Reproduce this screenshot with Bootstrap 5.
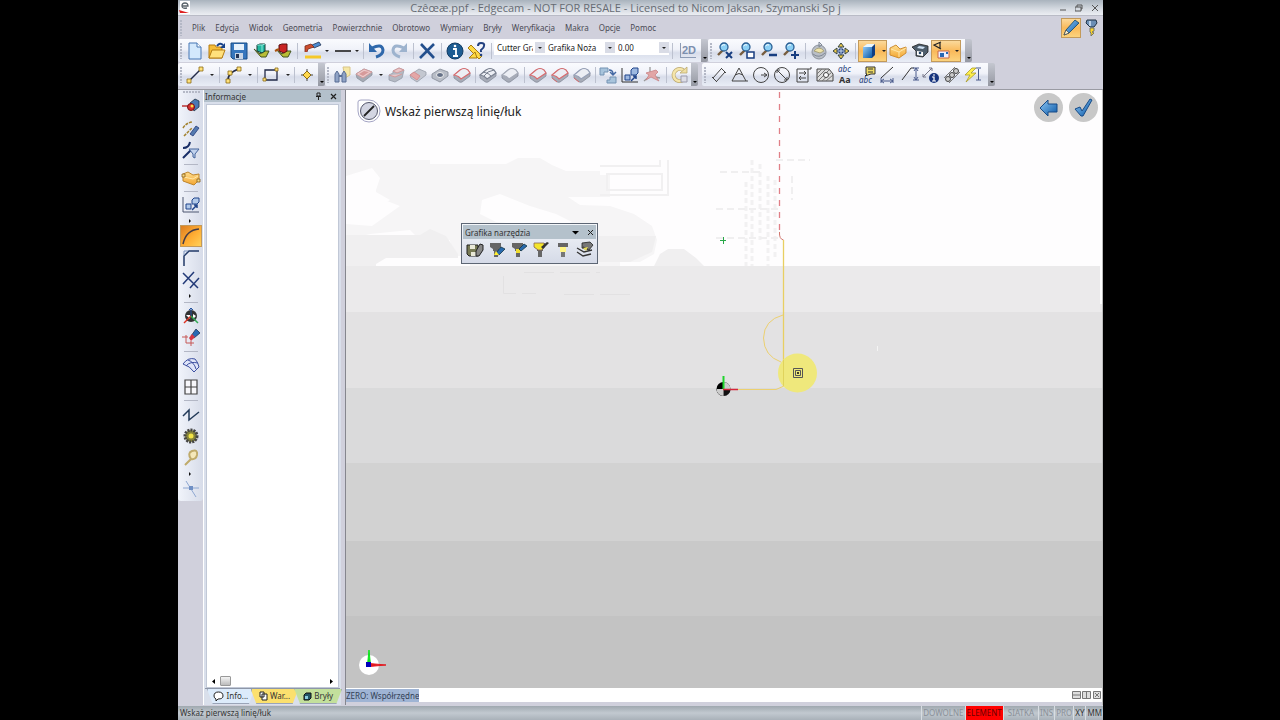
<!DOCTYPE html>
<html lang="pl">
<head>
<meta charset="utf-8">
<meta name="viewport" content="width=device-width, initial-scale=1">
<title>Edgecam</title>
<link rel="stylesheet" href="https://cdn.jsdelivr.net/npm/bootstrap@5.3.0/dist/css/bootstrap.min.css">
<style>
body{background:#000;font-family:"Noto Sans","Open Sans",sans-serif;font-size:8px;line-height:12px;color:#333}
.stage{display:grid;grid-template-columns:178fr 925fr 177fr;height:100vh}
.app{grid-column:2;background:#d0d0dc;min-width:0;overflow:hidden}
.titlebar{height:16px;background:linear-gradient(#a9b3bd,#d5dae1 60%,#eceef3);border-bottom:1px solid #b9bbc6}
.titlebar h1{font:11px/16px "Open Sans",sans-serif;color:#666b73;margin:0;white-space:nowrap}
.titlebar .wbtn{width:16px;height:15px}
.menubar{height:23px}
.menubar div{gap:10px}
.menubar a{color:#4b4b55;text-decoration:none;white-space:nowrap}
.plain{background:none;border:0;padding:0;color:inherit;display:flex;align-items:center;justify-content:center;flex:none}
.toolrow{height:24px}
.strip{height:23px;background:linear-gradient(#fafbfe,#f0f2f9 45%,#d8ddea 60%,#e9edf6);border-radius:2px 0 0 2px}
.grip{width:6px;height:17px;flex:none;background:radial-gradient(circle at 3px 2px,#b4b8c6 1px,transparent 1px) 0 0/6px 3px}
.tb{width:22px;height:22px}
.tb svg,.tb2 svg{width:18px;height:18px;flex:none;overflow:visible}
.tb2{width:32px;height:22px}
.crt{width:0;height:0;border:2px solid transparent;border-top-color:#222;border-bottom:0;margin-left:6px;flex:none}
.sp4,.sp6{flex:none;height:16px;background:linear-gradient(#bcc1cf,#bcc1cf) center/1px 100% no-repeat}
.sp4{width:4px}.sp6{width:6px}
.endcap{width:7px;height:23px;background:linear-gradient(#c4c7d0,#9598a2);border-radius:0 2px 2px 0;flex:none;display:flex;align-items:flex-end;justify-content:center;padding-bottom:3px}
.endcap::after{content:"";border:2px solid transparent;border-top-color:#000;border-bottom:0}
.hot{background:linear-gradient(#fbd99b,#f9b95a 50%,#fbd37e);border:1px solid #c39a5a}
.combo{height:15px;font-size:8px;line-height:13px;border:0;padding:0 12px 0 3px;border-radius:0;color:#222;appearance:none;flex:none;margin-top:-6px;background:linear-gradient(#d9dce6,#d9dce6) right/10px 11px no-repeat,#fff}
.cwrap{position:relative;display:flex}
.cwrap::after{content:"";position:absolute;right:3px;top:1px;border:2px solid transparent;border-top-color:#222;border-bottom:0}
.dims{width:286px}.dims .tb{flex:1;width:auto}
.work{min-height:0;border-top:1px solid #9a9ba3;margin-top:2px}
.vtools{width:25px;background:linear-gradient(90deg,#f1f4fb,#d7dce9);height:411px;border-radius:0 0 3px 3px;flex:none;display:flex;flex-direction:column;align-items:center}
.vgrip{width:18px;height:6px;background:radial-gradient(circle at 2px 2px,#b4b8c6 1px,transparent 1px) 0 0/3px 6px}
.vsep{width:14px;height:5px;background:linear-gradient(#b3b7c5,#b3b7c5) center/100% 1px no-repeat;flex:none}
.varr{height:9px;width:3px;flex:none;display:flex;align-items:center}
.varr::after{content:"";border:2px solid transparent;border-left-color:#111;border-right:0}
.side{width:138px;flex:none;margin-right:4px;background:#d9dfeb;border-left:1px solid #fff}
.side header{height:12px;line-height:11px;background:#b3c0cb;color:#333;padding:0 4px 0 1px}
.side .pane{background:#fff;border:1px solid #c1c8d6;margin:2px 2px 0;min-height:0}
.scroller{height:12px}
.scroller i{width:11px;height:10px;border:1px solid #999;background:linear-gradient(#f4f4f4,#bbb);border-radius:1px}
.tabs{height:17px;border-top:1px solid #8d96a8;padding:0 2px;margin:0 1px}
.tabs button{flex:1;height:15px;border:1px solid #9aa4b8;border-top:0;gap:2px;clip-path:polygon(0 0,100% 0,88% 100%,12% 100%);margin-right:-4px}
.view{border-left:1px solid #85868e;border-right:1px solid #bbb;min-width:0;padding-bottom:3px}
.canvas{position:relative;min-height:0;overflow:hidden;background:#c4c4c4}
.canvas>svg{position:absolute;inset:0;width:100%;height:100%}
.prompt{position:absolute;left:11px;top:7px;font:12px/30px "Noto Sans",sans-serif;color:#222}
.round{width:29px;height:29px;border-radius:50%;background:#c8c8c8}
.acts{position:absolute;right:4px;top:3px;gap:6px}
.float{position:absolute;left:115px;top:133px;width:137px;height:41px;border:1px solid #5d6674;background:linear-gradient(#f3f6fa,#d5dae7)}
.float header{height:14px;line-height:13px;background:#b4c1cb;margin:1px 1px 0;padding:0 2px}
.coordbar{height:14px;background:#fff}
.coordbar span{background:#9fb4d4;color:#333f55;width:73px;font-size:8px;line-height:13px;white-space:nowrap;overflow:hidden}
.statusbar{height:14px;margin-top:1px;background:linear-gradient(#9fa8af,#c2c9d0 50%,#a9b1b9);font-size:8px;line-height:14px}
.statusbar .off{color:#8b9199}
.statusbar .st{border-left:1px solid #d8dde2;padding:0 1px}
.statusbar .on{background:#f00;color:#6b0000}
</style>
</head>
<body>
<svg width="0" height="0" class="position-absolute" aria-hidden="true">
<defs>
<linearGradient id="blu" x2="1" y2="1"><stop stop-color="#8fc9f6"/><stop offset="1" stop-color="#0a57a5"/></linearGradient>
<linearGradient id="org" x2="0" y2="1"><stop stop-color="#ffdf90"/><stop offset="1" stop-color="#f2a531"/></linearGradient>
</defs>
<symbol id="slab" viewBox="0 0 18 18"><path d="M1 9L7 4Q11 1 15 4L17 7V10L9 16Q7 17 5 15L1 12Z" fill="#a7acb8" stroke="#858b99" stroke-width=".8"/><path d="M1 9L7 4Q11 1 15 4L17 7L8 13Q6 10 1 9Z" fill="#eceef4" stroke="currentColor" stroke-width="1.200"/></symbol>
<symbol id="mag" viewBox="0 0 18 18"><path d="M7 8L2 13" stroke="#775d3e" stroke-width="2.400"/><circle cx="8" cy="5" r="4" fill="#8cd0f5" stroke="#2a5f94" stroke-width="1.300"/><path d="M5.500 4Q7 2 9 3" stroke="#fff" fill="none"/></symbol>
<symbol id="cut" viewBox="0 0 18 18"><path d="M2 2H13V6L11 8V10H10V16H6V10H5V8L2 6Z"/></symbol>
</svg>
<div class="stage">
<div class="app d-flex flex-column">
<header class="titlebar d-flex align-items-center flex-shrink-0">
<svg width="14" height="14" viewBox="0 0 14 14"><rect x="2" width="10" height="13" fill="#fff"/><path d="M4 5H10Q10 2 7 2Q4 2 4 5Q4 8 9 7" fill="none" stroke="#59636a" stroke-width="1.300"/><path d="M1 9L11 12H2Z" fill="#d22"/></svg>
<h1 class="flex-grow-1 text-center ps-1">Czêœæ.ppf - Edgecam - NOT FOR RESALE - Licensed to Nicom Jaksan, Szymanski Sp j</h1>
<button class="plain wbtn" aria-label="Minimalizuj"><svg width="8" height="8"><path d="M1 6H7" stroke="#555"/></svg></button>
<button class="plain wbtn" aria-label="Przywróć"><svg width="8" height="8"><path d="M2 3V1H7V5H6M0 3H6V7H0Z" fill="none" stroke="#555"/></svg></button>
<button class="plain wbtn" aria-label="Zamknij"><svg width="8" height="8"><path d="M1 1L7 7M7 1L1 7" stroke="#555"/></svg></button>
</header>
<nav class="menubar d-flex align-items-center flex-shrink-0">
<span class="grip me-1"></span>
<div class="d-flex">
<a href="#" class="ms-1">Plik</a><a href="#">Edycja</a><a href="#">Widok</a><a href="#">Geometria</a><a href="#">Powierzchnie</a><a href="#">Obrotowo</a><a href="#">Wymiary</a><a href="#">Bryły</a><a href="#">Weryfikacja</a><a href="#">Makra</a><a href="#">Opcje</a><a href="#">Pomoc</a>
</div>
<button class="plain tb hot ms-auto" style="width:20px;height:20px" aria-label="Tryb projektowania"><svg viewBox="0 0 18 18"><path d="M2 16L4 11L13 1L17 4L7 14Z" fill="url(#blu)" stroke="#146" stroke-width=".8"/><path d="M2 16L4 11L7 14Z" fill="#fff2cc" stroke="#333" stroke-width=".6"/></svg></button>
<button class="plain tb" aria-label="Tryb obróbki"><svg viewBox="0 0 18 18"><path d="M4 1H13L14 4L11 8H7L3 4Z" fill="#6b8eb5" stroke="#234"/><path d="M7 2V7" stroke="#d5e6f7" stroke-width="1.500"/><path d="M7 9H11V12L9 13L11 14L8 17V14L7 13Z" fill="#ffd629" stroke="#776"/></svg></button>
</nav>

<div class="toolrow d-flex flex-shrink-0">
<div class="strip d-flex align-items-center" role="toolbar" aria-label="Standard">
<span class="grip"></span>
<button class="plain tb" aria-label="Nowy"><svg viewBox="0 0 18 18"><path d="M3 1H11L15 5V17H3Z" fill="#d3e8fc" stroke="#4676b4"/><path d="M11 1V5H15" fill="#fff" stroke="#4676b4"/></svg></button>
<button class="plain tb" aria-label="Otwórz"><svg viewBox="0 0 18 18"><path d="M1 16V3H7L8 5H14V16Z" fill="#f6bd38" stroke="#b57d12"/><path d="M1 16L4 8H17L14 16Z" fill="#ffe07c" stroke="#b57d12"/><path d="M9 4Q12 0 15 3" fill="none" stroke="#16418a" stroke-width="2"/><path d="M17 1V6H12Z" fill="#16418a"/></svg></button>
<button class="plain tb" aria-label="Zapisz"><svg viewBox="0 0 18 18"><path d="M1 1H17V17H3L1 15Z" fill="#3676bd" stroke="#184c86"/><path d="M4 2H14V8H4Z" fill="#e7f1fb"/><path d="M5 11H13V17H5Z" fill="#c8d5e5"/><path d="M6 12H9V16H6Z" fill="#235"/></svg></button>
<button class="plain tb" aria-label="Wstaw"><svg viewBox="0 0 18 18"><path d="M2 7L9 15H14L17 9H12L8 12Z" fill="#b8bd36" stroke="#452"/><path d="M5 3L8 2H13V9L10 11L5 9Z" fill="#20b7a0" stroke="#163b35"/><path d="M5 3H10V10M10 3L13 2" fill="none" stroke="#8fe6da"/></svg></button>
<button class="plain tb" aria-label="Eksportuj"><svg viewBox="0 0 18 18"><path d="M2 7L9 15H14L17 9H12L8 12Z" fill="#b8bd36" stroke="#452"/><path d="M5 3L8 2H13V9L10 11L5 9Z" fill="#c92424" stroke="#5b1010"/><path d="M1 9L5 7" stroke="#a51" stroke-width="2"/></svg></button>
<span class="sp6"></span>
<button class="plain tb2 justify-content-start" style="width:30px" aria-label="Kolor"><svg viewBox="0 0 18 18" class="ms-1"><path d="M8 3L15 0L17 3L10 6Z" fill="#4c8ad0" stroke="#235" stroke-width=".8"/><path d="M1 10V4L7 2L10 5L4 7L3 10" fill="#cc4d2d" stroke="#77291b" stroke-width=".8"/><path d="M1 15H17" stroke="#f5c829" stroke-width="3"/></svg><i class="crt" style="margin-left:3px"></i></button>
<button class="plain tb2 justify-content-start" style="width:30px" aria-label="Styl linii"><svg viewBox="0 0 18 18" class="ms-1"><path d="M1 9H17" stroke="#111" stroke-width="1.500"/></svg><i class="crt" style="margin-left:3px"></i></button>
<span class="sp6"></span>
<button class="plain tb" aria-label="Cofnij"><svg viewBox="0 0 18 18"><path d="M4 6Q14 1 15 8Q15 13 8 15" fill="none" stroke="#2f68ab" stroke-width="3"/><path d="M1 1V10H9Z" fill="#2f68ab"/></svg></button>
<button class="plain tb" aria-label="Ponów"><svg viewBox="0 0 18 18"><path d="M14 6Q4 1 3 8Q3 13 10 15" fill="none" stroke="#9db3ce" stroke-width="3"/><path d="M17 1V10H9Z" fill="#9db3ce"/></svg></button>
<span class="sp6"></span>
<button class="plain tb" aria-label="Usuń"><svg viewBox="0 0 18 18"><path d="M3 2L16 16M16 2L2 16" stroke="#234f8d" stroke-width="2.600"/></svg></button>
<span class="sp6"></span>
<button class="plain tb" aria-label="Informacja"><svg viewBox="0 0 18 18"><circle cx="9" cy="9" r="8" fill="#1d5c92" stroke="#123b63"/><path d="M7 7H10V14M7 14H12" stroke="#fff" stroke-width="1.800" fill="none"/><circle cx="9" cy="4" r="1.300" fill="#fff"/></svg></button>
<button class="plain tb" aria-label="Pomoc"><svg viewBox="0 0 18 18"><path d="M0 6L3 3L14 14L11 17Z" fill="#ffda45" stroke="#a67c10"/><path d="M1 16L7 10L9 16Z" fill="#ffda45" stroke="#a67c10"/><path d="M10 4Q10 1 13 1Q17 1 16 4Q16 6 13 8V10" fill="none" stroke="#214080" stroke-width="2"/><circle cx="13" cy="13" r="1.300" fill="#214080"/></svg></button>
<span class="sp6"></span>
<div class="cwrap"><select class="combo" style="width:51px" aria-label="Grafika"><option>Cutter Graphics</option></select></div>
<div class="cwrap"><select class="combo" style="width:70px" aria-label="Warstwa"><option>Grafika Noża</option></select></div>
<div class="cwrap"><select class="combo" style="width:54px" aria-label="Poziom"><option>0.00</option></select></div>
<span class="sp6"></span>
<button class="plain tb" style="width:26px;font:bold 11px/14px 'Liberation Sans',sans-serif;color:#7c8fae" aria-label="2D"><span style="border-left:1px solid #8c9bb5;border-bottom:1px solid #8c9bb5;padding-left:1px">2D</span></button>
</div>
<span class="endcap"></span>
<div class="strip d-flex align-items-center" role="toolbar" aria-label="Widok">
<span class="grip"></span>
<button class="plain tb" aria-label="Pokaż wszystko"><svg viewBox="0 0 18 18"><use href="#mag"/><path d="M10 10L16 16M16 10L10 16" stroke="#173d80" stroke-width="2"/></svg></button>
<button class="plain tb" aria-label="Okno"><svg viewBox="0 0 18 18"><use href="#mag"/><path d="M9 10H16V16H9Z" fill="#fff" stroke="#173d80" stroke-width="1.500"/></svg></button>
<button class="plain tb" aria-label="Pomniejsz"><svg viewBox="0 0 18 18"><use href="#mag"/><path d="M9 13H17" stroke="#173d80" stroke-width="2.500"/></svg></button>
<button class="plain tb" aria-label="Powiększ"><svg viewBox="0 0 18 18"><use href="#mag"/><path d="M9 13H17M13 9V17" stroke="#173d80" stroke-width="2"/></svg></button>
<span class="sp6"></span>
<button class="plain tb" aria-label="Obróć"><svg viewBox="0 0 18 18"><circle cx="9" cy="10" r="7" fill="#b9bec6" stroke="#8b929c"/><path d="M4 9Q9 3 14 9L10 11Z" fill="#eee3a9" stroke="#a8a37d"/><path d="M3 12Q9 17 15 11M9 0V5L12 3Z" fill="none" stroke="#7f8896"/></svg></button>
<button class="plain tb" aria-label="Przesuń"><svg viewBox="0 0 18 18"><path d="M9 5L13 9L9 13L5 9Z" fill="#26427f"/><path d="M9 1L6 5H12ZM9 17L6 13H12ZM1 9L5 6V12ZM17 9L13 6V12Z" fill="#f1cb49" stroke="#344"/><path d="M9 6V12M6 9H12" stroke="#cde"/></svg></button>
<span class="sp6"></span>
<button class="plain tb2 hot" style="width:29px" aria-label="Cieniowanie"><svg viewBox="0 0 18 18"><path d="M3 5L7 2H15L12 5Z" fill="#e8f6ff"/><path d="M3 5H12V16H3Z" fill="url(#blu)"/><path d="M12 5L15 2V13L12 16Z" fill="#113e82"/></svg><i class="crt ms-1"></i></button>
<button class="plain tb" aria-label="Bryła"><svg viewBox="0 0 18 18"><path d="M1 6L7 3L11 7L17 5V11L10 16L1 13Z" fill="url(#org)" stroke="#cf8e33"/><path d="M2 7L10 10L17 6M10 10V15" fill="none" stroke="#ffe6a8"/></svg></button>
<button class="plain tb" aria-label="Ustaw widok"><svg viewBox="0 0 18 18"><path d="M1 5L8 2L17 4V10L12 15L5 14V9Z" fill="#4d5d6c" stroke="#222" stroke-width=".8"/><path d="M6 9L12 10V14L6 13Z" fill="#fff"/><path d="M8 4L14 5L12 7L6 6Z" fill="#cfe1f4"/><circle cx="9" cy="11" r="1.300" fill="#246"/></svg></button>
<button class="plain tb2 hot" style="width:30px" aria-label="Dynamika"><svg viewBox="0 0 18 18"><path d="M8 0L1 3L8 7M7 1V6" fill="none" stroke="#222" stroke-width="1.200"/><path d="M5 9H16V16H5Z" fill="#eef" stroke="#c64"/><path d="M7 11H11V15H7ZM13 10H15V12H13Z" fill="#2867b5"/></svg><i class="crt ms-1"></i></button>
<span class="sp4" style="background:none"></span>
</div>
<span class="endcap"></span>
</div>

<div class="toolrow d-flex flex-shrink-0">
<div class="strip d-flex align-items-center" role="toolbar" aria-label="Geometria">
<span class="grip"></span>
<button class="plain tb2" aria-label="Linia"><svg viewBox="0 0 18 18"><path d="M3 15L15 3" stroke="#222a48" stroke-width="1.500"/><path d="M1 13H5V17H1ZM13 1H17V5H13Z" fill="#ffe27b" stroke="#8a6a14" stroke-width=".8"/></svg><i class="crt"></i></button>
<span class="sp6"></span>
<button class="plain tb2" aria-label="Łuk"><svg viewBox="0 0 18 18"><path d="M4 15Q3 7 15 3" fill="none" stroke="#222a48" stroke-width="1.500"/><path d="M2 13H6V17H2ZM4 5H8V9H4ZM13 1H17V5H13Z" fill="#ffe27b" stroke="#8a6a14" stroke-width=".8"/></svg><i class="crt"></i></button>
<span class="sp6"></span>
<button class="plain tb2" aria-label="Prostokąt"><svg viewBox="0 0 18 18"><path d="M3 4H15V14H3Z" fill="none" stroke="#222a48" stroke-width="1.300"/><path d="M1 12H4V15H1ZM13 2H16V5H13Z" fill="#ffe27b" stroke="#8a6a14" stroke-width=".8"/></svg><i class="crt"></i></button>
<span class="sp4"></span>
<button class="plain tb" aria-label="Punkt"><svg viewBox="0 0 18 18"><path d="M9 3V15M3 9H15" stroke="#444"/><path d="M9 5L13 9L9 13L5 9Z" fill="#ffd84d" stroke="#8a6a14"/></svg></button>
</div>
<span class="endcap"></span>
<div class="strip d-flex align-items-center" role="toolbar" aria-label="Bryły">
<span class="grip"></span>
<button class="plain tb" aria-label="Znajdź cechy"><svg viewBox="0 0 18 18"><path d="M10 1H17V9L12 12Z" fill="#f6e8a6" stroke="#d9c587"/><path d="M2 16V8L4 5L6 8V16ZM9 16V8L11 5L13 8V16Z" fill="#8fa3c6" stroke="#586d94"/><path d="M6 10H9" stroke="#586d94" stroke-width="2"/></svg></button>
<button class="plain tb2" aria-label="Kieszeń"><svg viewBox="0 0 18 18"><path d="M1 8L9 3L17 6V9L8 16L2 12Z" fill="#a5aab4" stroke="#8a909c" stroke-width=".8"/><path d="M1 8L9 3L17 6L8 12Z" fill="#eccaca" stroke="#d09c9e"/><path d="M4 8L9 5L14 6L8 10Z" fill="#d69a9a"/></svg><i class="crt"></i></button>
<button class="plain tb" aria-label="Bryła 1"><svg viewBox="0 0 18 18"><path d="M2 9L6 7V5L12 2L17 4L15 12L8 16L2 14Z" fill="#b4b9c3" stroke="#979da9" stroke-width=".8"/><path d="M6 5L12 2L17 4L10 7ZM2 9L8 11L15 8" fill="#e9c6c8" stroke="#d09a9c"/></svg></button>
<button class="plain tb" aria-label="Bryła 2"><svg viewBox="0 0 18 18"><path d="M1 9L10 3L17 6V9L8 16L2 12Z" fill="#c3c7d0" stroke="#989eaa" stroke-width=".8"/><path d="M1 9L5 6L11 10L8 14Z" fill="#e4a7a7" stroke="#d49094"/></svg></button>
<button class="plain tb" aria-label="Bryła 3"><svg viewBox="0 0 18 18"><path d="M1 8L9 3L17 6V10L9 16L1 12Z" fill="#b8bdc7" stroke="#858b97" stroke-width=".8"/><ellipse cx="9" cy="9" rx="3.500" ry="2.500" fill="#657187" stroke="#eee"/></svg></button>
<button class="plain tb" aria-label="Bryła 4" style="color:#d96b6e"><svg><use href="#slab"/></svg></button>
<span class="sp4"></span>
<button class="plain tb" aria-label="Siatka bryły" style="color:#7a8190"><svg viewBox="0 0 18 18"><use href="#slab"/><path d="M4 6Q10 7 12 10M5 10Q8 5 15 4" stroke="#7a8190" fill="none"/></svg></button>
<button class="plain tb" aria-label="Bryła 5" style="color:#a6abb8"><svg><use href="#slab"/></svg></button>
<span class="sp6"></span>
<button class="plain tb" aria-label="Bryła 6" style="color:#d96b6e"><svg><use href="#slab"/></svg></button>
<button class="plain tb" aria-label="Bryła 7" style="color:#d96b6e"><svg viewBox="0 0 18 18"><use href="#slab"/><path d="M1 12L6 16" stroke="#d96b6e"/></svg></button>
<button class="plain tb" aria-label="Bryła 8" style="color:#97a1b8"><svg viewBox="0 0 18 18"><use href="#slab"/><path d="M1 12L6 16" stroke="#d96b6e"/></svg></button>
<span class="sp4"></span>
<button class="plain tb" aria-label="Transformuj"><svg viewBox="0 0 18 18"><path d="M1 2H9V6H5V9H1ZM11 11H17V17H8V14H11Z" fill="#a8c4dc" stroke="#7593b3"/><path d="M10 4Q14 4 14 8M11 6L14 9L17 6" fill="none" stroke="#4469a3" stroke-width="1.500"/></svg></button>
<button class="plain tb" aria-label="Przesuń bryłę"><svg viewBox="0 0 18 18"><path d="M1 2V16H17" fill="none" stroke="#333"/><path d="M4 9H9V14H4ZM10 4L12 2H17V7L15 9H10Z" fill="#9db8e0" stroke="#21458b"/><path d="M10 15L15 10M12 10H15V13" fill="none" stroke="#21458b" stroke-width="1.500"/></svg></button>
<button class="plain tb" aria-label="Układ współrzędnych"><svg viewBox="0 0 18 18"><path d="M7 1V10L1 15M7 10L17 12" fill="none" stroke="#999" stroke-width="1.300"/><path d="M3 7L13 4L15 6L12 9L16 15L8 11L3 14L6 9Z" fill="#e2a6a6" stroke="#c98385" stroke-width=".8"/></svg></button>
<span class="sp6"></span>
<button class="plain tb" aria-label="Obrót"><svg viewBox="0 0 18 18"><path d="M13 5A6 6 0 1 0 12 14" fill="none" stroke="#bba970" stroke-width="4"/><path d="M13 5A6 6 0 1 0 12 14" fill="none" stroke="#f5e5aa" stroke-width="2.500"/><path d="M9 7H16V1Z" fill="#f0dfa2" stroke="#bba970" stroke-width=".8"/><path d="M10 10H16V16H10Z" fill="#dddde6" stroke="#9b9bac"/></svg></button>
</div>
<span class="endcap me-1"></span>
<div class="strip d-flex align-items-center dims" role="toolbar" aria-label="Wymiary">
<span class="grip"></span>
<button class="plain tb" aria-label="Wymiar równoległy"><svg viewBox="0 0 18 18"><path d="M3 12L11 3M6 16L15 6M2 11L7 16M11 2L16 7" stroke="#444"/></svg></button>
<button class="plain tb" aria-label="Kąt"><svg viewBox="0 0 18 18"><path d="M8 2L1 15H17M8 2L15 15M4 9Q8 6 12 9" fill="none" stroke="#444"/></svg></button>
<button class="plain tb" aria-label="Promień"><svg viewBox="0 0 18 18"><circle cx="9" cy="9" r="7.500" fill="none" stroke="#444"/><path d="M9 9H15M12 7L15 9L12 11" fill="none" stroke="#444"/></svg></button>
<button class="plain tb" aria-label="Średnica"><svg viewBox="0 0 18 18"><circle cx="9" cy="9" r="7.500" fill="none" stroke="#444"/><path d="M4 4L14 14M4 7V4H7M14 11V14H11" fill="none" stroke="#444"/></svg></button>
<button class="plain tb" aria-label="Współrzędne"><svg viewBox="0 0 18 18"><path d="M2 3H16V1M2 3V16H13V3M4 7H11M4 12H11M9 5L11 7L9 9M6 10L4 12L6 14" fill="none" stroke="#444"/></svg></button>
<button class="plain tb" aria-label="Kreskowanie"><svg viewBox="0 0 18 18"><path d="M1 3H13L17 8V15H1Z" fill="#ddd" stroke="#444"/><path d="M1 8L6 3M1 12L10 3M2 15L13 4M6 15L16 6M10 15L17 9" stroke="#777"/><circle cx="10" cy="9" r="2.500" fill="#fff" stroke="#444"/></svg></button>
<button class="plain tb" aria-label="Tekst"><svg viewBox="0 0 18 18"><text x="1" y="6" font-size="8" font-style="italic" fill="#223a78">abc</text><text x="2" y="17" font-size="9" font-weight="bold" fill="#333">Aa</text></svg></button>
<button class="plain tb" aria-label="Etykieta"><svg viewBox="0 0 18 18"><path d="M8 1H17V8H13L7 10L9 8H8Z" fill="#f0dc64" stroke="#333"/><path d="M10 3H15M10 6H15" stroke="#333"/><text x="1" y="17" font-size="8" font-style="italic" fill="#223a78">abc</text></svg></button>
<button class="plain tb" aria-label="Wymiar poziomy"><svg viewBox="0 0 18 18"><path d="M2 12L14 1" stroke="#333"/><path d="M2 12V17M14 12V17M2 15H14M5 13L2 15L5 17M11 13L14 15L11 17" fill="none" stroke="#4a5b8c"/></svg></button>
<button class="plain tb" aria-label="Wymiar pionowy"><svg viewBox="0 0 18 18"><path d="M1 14L10 2H13" fill="none" stroke="#333"/><path d="M12 2H18M12 14H18M15 2V14M13 5L15 2L17 5M13 11L15 14L17 11" fill="none" stroke="#4a5b8c"/></svg></button>
<button class="plain tb" aria-label="Informacja o wymiarze"><svg viewBox="0 0 18 18"><path d="M1 11L10 2M1 8V11H4M7 2H10V5" stroke="#778" fill="none"/><circle cx="12" cy="12" r="5" fill="#16337d"/><path d="M10 11H12V15M10 15H14M11 9H13" stroke="#fff" stroke-width="1.200" fill="none"/></svg></button>
<button class="plain tb" aria-label="Połączenie"><svg viewBox="0 0 18 18"><path d="M1 12L12 1M6 17L17 6" stroke="#777"/><g fill="#ccc" stroke="#444"><circle cx="5" cy="13" r="2.500"/><circle cx="9" cy="9" r="2.500"/><circle cx="13" cy="5" r="2.500"/></g></svg></button>
<button class="plain tb" aria-label="Wymiar automatyczny"><svg viewBox="0 0 18 18"><path d="M8 2L1 9H6L2 16L12 7H7L12 2Z" fill="#fff04b" stroke="#a99b2a" stroke-width=".8"/><path d="M12 2H17M12 14H17M14.500 3V14" stroke="#4a5b8c"/></svg></button>
<span class="sp4" style="background:none"></span>
</div>
<span class="endcap"></span>
</div>

<main class="work d-flex flex-grow-1">
<div class="vtools" role="toolbar" aria-label="Edycja">
<span class="vgrip"></span>
<button class="plain tb" aria-label="Rysuj"><svg viewBox="0 0 18 18"><path d="M8 5L13 1L17 3V9L12 13Z" fill="#4b78b4" stroke="#234" stroke-width=".8"/><path d="M0 8H7" stroke="#b33" stroke-width="1.500"/><circle cx="9" cy="9" r="3.500" fill="#d53030" stroke="#711"/><circle cx="10" cy="8" r="1.500" fill="#fd4"/></svg></button>
<button class="plain tb" aria-label="Edytuj"><svg viewBox="0 0 18 18"><path d="M1 8Q4 3 10 2M2 16L10 8" fill="none" stroke="#a3822e" stroke-width="1.500" stroke-dasharray="3 1"/><path d="M8 14L14 6L17 8L11 16Z" fill="#547ab0" stroke="#223a78" stroke-width=".8"/></svg></button>
<button class="plain tb" aria-label="Filtr"><svg viewBox="0 0 18 18"><path d="M1 6Q7 6 8 0M1 16L9 8" fill="none" stroke="#192e67" stroke-width="2"/><path d="M7 7H17L13 12V16L11 15V12Z" fill="#c1d2ed" stroke="#45659b"/></svg></button>
<span class="vsep"></span>
<button class="plain tb" aria-label="Bryła"><svg viewBox="0 0 18 18"><path d="M1 5L6 3L11 6L17 5V11L12 16L1 12Z" fill="url(#org)" stroke="#be852c"/><path d="M2 8L11 10L16 7" fill="none" stroke="#ffe7a7"/><path d="M0 5H3V8H0ZM15 10H18V13H15Z" fill="#f8d984" stroke="#895f1b" stroke-width=".8"/></svg></button>
<span class="vsep"></span>
<button class="plain tb" aria-label="Przesuń"><svg viewBox="0 0 18 18"><path d="M1 1V16H17" fill="none" stroke="#4c5670"/><path d="M4 8H9V13H4ZM10 4L12 2H17V6L15 8H10Z" fill="#b1c9e9" stroke="#21458b"/><path d="M10 14L15 9M12 9H15V12" fill="none" stroke="#21458b" stroke-width="1.500"/></svg></button>
<span class="varr"></span>
<button class="plain tb hot" style="background:linear-gradient(135deg,#dc7e21,#ffae34 55%,#ffd05a)" aria-label="Zaokrąglenie"><svg viewBox="0 0 18 18"><path d="M1 17Q4 3 17 2" fill="none" stroke="#443b46" stroke-width="1.500"/></svg></button>
<button class="plain tb" aria-label="Faza"><svg viewBox="0 0 18 18"><path d="M2 17V7L7 2H17" fill="none" stroke="#223a68" stroke-width="1.500"/><path d="M2 6V2H6" fill="none" stroke="#7c94bd"/></svg></button>
<button class="plain tb" aria-label="Przytnij"><svg viewBox="0 0 18 18"><path d="M1 2L16 17M12 1L1 13M17 7L8 17" stroke="#223a78" stroke-width="1.500"/></svg></button>
<span class="varr"></span>
<span class="vsep"></span>
<button class="plain tb" aria-label="Początek układu"><svg viewBox="0 0 18 18"><circle cx="9" cy="9" r="6" fill="#333"/><path d="M4 8H8V12ZM11 7L14 9L11 12Z" fill="#fff"/><path d="M9 9V1M7 3L9 1L11 3" stroke="#2453a0" fill="none"/><path d="M9 9L2 16" stroke="#d32" stroke-width="1.500"/><path d="M9 9L16 16" stroke="#3a5" stroke-width="1.500"/></svg></button>
<button class="plain tb" aria-label="Pisak"><svg viewBox="0 0 18 18"><path d="M9 7L14 0L18 4L12 9Z" fill="#2869b3" stroke="#235" stroke-width=".8"/><path d="M7 9L10 5L13 8L9 12Z" fill="#d53742"/><path d="M4 6V14H12M0 8H6M9 12V17" stroke="#c65856" fill="none"/></svg></button>
<span class="vsep"></span>
<button class="plain tb" aria-label="Powierzchnia"><svg viewBox="0 0 18 18"><path d="M1 8Q6 1 13 3Q16 6 17 11L12 16Q8 10 1 8ZM6 4Q12 6 14 13M4 10Q8 5 16 7" fill="#dfe5f8" stroke="#3c4fa0"/></svg></button>
<button class="plain tb" aria-label="Tabela"><svg viewBox="0 0 18 18"><path d="M3 2H15V16H3ZM9 2V16M3 9H15" fill="#f7f7fb" stroke="#444" stroke-width="1.200"/></svg></button>
<span class="vsep"></span>
<button class="plain tb" aria-label="Polilinia"><svg viewBox="0 0 18 18"><path d="M1 11L7 5V15L17 7" fill="none" stroke="#223a58" stroke-width="1.500"/></svg></button>
<button class="plain tb" aria-label="Koło"><svg viewBox="0 0 18 18"><circle cx="9" cy="9" r="6" fill="#86843a" stroke="#444" stroke-width="3" stroke-dasharray="2 1"/><circle cx="9" cy="9" r="2.500" fill="#f1e345"/></svg></button>
<button class="plain tb" aria-label="Klucz"><svg viewBox="0 0 18 18"><path d="M3 16L9 10Q5 4 10 2Q16 0 15 6Q14 11 9 10" fill="#f5e8ba" stroke="#c0ab6b" stroke-width="2"/></svg></button>
<span class="varr"></span>
<button class="plain tb" aria-label="Punkt przecięcia"><svg viewBox="0 0 18 18"><path d="M1 8H17M4 1L14 17" stroke="#8fa8d2"/><path d="M7 6H11V10H7Z" fill="#6f8fc4"/></svg></button>
</div>

<aside class="side d-flex flex-column">
<header class="d-flex align-items-center"><span class="flex-grow-1">Informacje</span>
<button class="plain me-2" aria-label="Przypnij"><svg width="7" height="8"><path d="M2 1H5V4H2ZM1 4.500H6M3.500 4V8" fill="none" stroke="#222"/></svg></button>
<button class="plain" aria-label="Zamknij"><svg width="7" height="7"><path d="M1 1L6 6M6 1L1 6" stroke="#222" stroke-width="1.200"/></svg></button></header>
<div class="pane d-flex flex-column flex-grow-1"><div class="flex-grow-1"></div>
<div class="scroller d-flex align-items-center px-1"><svg width="5" height="7"><path d="M4 1V6L1 3.500Z"/></svg><i class="ms-1"></i><svg width="5" height="7" class="ms-auto"><path d="M1 1V6L4 3.500Z"/></svg></div></div>
<div class="tabs d-flex">
<button class="plain" style="background:#dcebfb"><svg width="11" height="10"><path d="M3 8Q1 7 1 5Q1 1 5.500 1Q10 1 10 5Q10 8 5 8L3 10Z" fill="#fff" stroke="#222"/></svg>Info...</button>
<button class="plain" style="background:#fbe06e"><svg width="9" height="10"><path d="M1 1H5V6H1ZM3 3H8V9H3Z" fill="#fff" stroke="#222"/></svg>War...</button>
<button class="plain" style="background:#c3e09c"><svg width="9" height="9"><path d="M1 3L3 1H8V6L6 8H1Z" fill="#256" stroke="#111"/><path d="M2 4H5V7H2Z" fill="#8cd"/></svg>Bryły</button>
</div>
</aside>

<section class="view d-flex flex-column flex-grow-1">
<div class="canvas flex-grow-1">
<svg viewBox="346 90 756 598" preserveAspectRatio="xMinYMin slice" aria-hidden="true">
<rect x="346" y="90" width="756" height="176" fill="#fefdfe"/>
<path fill="#f6f5f6" d="M346 160H430V164H506L518 158H540L552 165L566 171H600V175H610V197H568L580 205L610 206L634 214L652 226L657 240L654 254L640 262H620V266H470V256H452L450 240H420L410 230L370 234L346 240V214L372 210L390 200L376 192L374 175L346 178Z"/>
<path fill="#fefdfe" d="M482 200L500 194L530 206L556 214L572 222L560 228L496 222L480 214ZM346 176L372 168L380 178L374 196L400 206L372 226L346 224Z"/>
<path fill="#f0eff0" d="M346 235H420L430 229L446 236L458 254V258H386L376 264V266H346ZM597 236H656L652 252L630 262H597ZM654 266L660 254L668 249H684L696 258L704 266Z"/>
<path fill="none" stroke="#f1f0f1" stroke-width="2" d="M600 166H660V160M600 195H668V160M607 174H662V190H607Z"/>
<path fill="none" stroke="#f2f1f2" stroke-width="3" stroke-dasharray="5 3" d="M746 182V266M752 160V266M760 164V240M768 176V266M775 180V260"/>
<path fill="none" stroke="#f0eff0" stroke-width="2" stroke-dasharray="7 4" d="M720 172H760M716 209H780M716 238H780M776 160H810M792 176V200"/>
<rect x="346" y="266" width="756" height="46" fill="#ebeaeb"/>
<rect x="346" y="312" width="756" height="76" fill="#e3e2e3"/>
<rect x="346" y="388" width="756" height="75" fill="#dadadb"/>
<rect x="346" y="463" width="756" height="78" fill="#d2d2d2"/>
<rect x="346" y="541" width="756" height="75" fill="#c9c9c9"/>
<rect x="346" y="616" width="756" height="72" fill="#c3c3c3"/>
<path fill="none" stroke="#e2e1e2" stroke-dasharray="30 6" d="M503.500 276V293.500H536M564 294.500H636M524 272.500H600"/>
<rect x="1100" y="90" width="2" height="214" fill="#fff"/>
<path d="M779.500 92V234" stroke="#e08088" stroke-width="1.300" stroke-dasharray="6 6"/>
<path d="M779.500 232Q779 239 783.500 240" stroke="#d0756c" fill="none"/>
<path d="M783.500 240V362" stroke="#e8cf62" stroke-width="1.300"/>
<path d="M783 315Q764 320 763.500 338Q764 356 781 362M736 389.500H776L784 386" fill="none" stroke="#ecd070"/>
<circle cx="797.500" cy="373" r="19.500" fill="#efe87c"/>
<path d="M783.500 360V386" stroke="#e0d35c"/>
<path d="M793.500 368.500H802.500V377.500H793.500ZM795.500 370.500H800.500V375.500H795.500Z" fill="none" stroke="#555"/><circle cx="798" cy="373" r="1"/>
<path d="M720 240.500H726M723.500 237V244" stroke="#28a848"/>
<circle cx="723.500" cy="389" r="7" fill="#000"/><path d="M723.500 389V382A7 7 0 0 1 730.500 389ZM723.500 389V396A7 7 0 0 0 730.500 389Z" fill="#ccc"/><path d="M723.500 389V396A7 7 0 0 1 716.500 389Z" fill="#111"/><path d="M723.500 389V396A7 7 0 0 0 730.500 389Z" fill="#111"/><path d="M723.500 389V396A7 7 0 0 1 716.500 389Z" fill="#ccc"/>
<path d="M723.500 376V389" stroke="#1fd42c" stroke-width="2"/><path d="M723 389.500H738" stroke="#d5253a" stroke-width="1.500"/>
<circle cx="369" cy="665" r="10" fill="#fff"/><path d="M367.500 665L369 650L370.500 665Z" fill="#0be61b" stroke="#0be61b"/><path d="M369 663.500L386 665L369 666.500Z" fill="#e21b22" stroke="#e21b22"/><rect x="366" y="662" width="5" height="5" fill="#00b"/>
<path d="M877.500 346V351" stroke="#f4f4f4"/>
</svg>
<div class="prompt d-flex align-items-center"><svg width="24" height="26" viewBox="0 0 24 26" class="me-1"><path d="M1 3Q1 1 4 1H12A11 11 0 1 1 1 12Z" fill="#fff" stroke="#a4a4c4"/><circle cx="12" cy="12" r="8.500" fill="#d3d5e2" stroke="#55576c"/><path d="M7 17L17 7" stroke="#222" stroke-width="1.800"/></svg>Wskaż pierwszą linię/łuk</div>
<div class="acts d-flex">
<button class="plain round" aria-label="Wstecz"><svg width="20" height="18" viewBox="0 0 20 18"><path d="M1 9L9 1V5H18V13H9V17Z" fill="url(#blu)" stroke="#174b87"/></svg></button>
<button class="plain round" aria-label="Zatwierdź"><svg width="20" height="20" viewBox="0 0 20 20"><path d="M1 11L6 9L8 13L16 1L18 2L9 18H7Z" fill="url(#blu)" stroke="#174b87"/></svg></button>
</div>
<div class="float">
<header class="d-flex align-items-center"><span class="flex-grow-1">Grafika narzędzia</span><svg width="7" height="5" class="me-2"><path d="M0 1H7L3.500 4.500Z"/></svg><button class="plain" aria-label="Zamknij"><svg width="7" height="7"><path d="M1 1L6 6M6 1L1 6" stroke="#222"/></svg></button></header>
<div class="d-flex justify-content-center">
<button class="plain tb" aria-label="Zapisz narzędzie"><svg viewBox="0 0 18 18"><path d="M1 4H12V15H3L1 13Z" fill="#777a55" stroke="#222"/><path d="M4 4H9V8H4ZM5 11H10V15H5Z" fill="#e8e8d8"/><path d="M10 10L14 3L17 4V9L13 15H10Z" fill="#888" stroke="#222"/></svg></button>
<button class="plain tb" aria-label="Uchwyt"><svg viewBox="0 0 18 18"><use href="#cut" fill="#666"/><path d="M8 12L13 6L17 8L11 14Z" fill="#286aae" stroke="#134" stroke-width=".8"/><path d="M6 14L8 10L11 14Z" fill="#fe3"/></svg></button>
<button class="plain tb" aria-label="Trzonek"><svg viewBox="0 0 18 18"><use href="#cut" fill="#666"/><path d="M6 8H10V12H6Z" fill="#f0dd2e"/><path d="M9 8L14 3L17 5L11 10Z" fill="#286aae" stroke="#134" stroke-width=".8"/></svg></button>
<button class="plain tb" aria-label="Oprawka"><svg viewBox="0 0 18 18"><use href="#cut" fill="#666"/><path d="M2 2H12V6L10 9H6L2 6Z" fill="#f4e52b" stroke="#865" stroke-width=".8"/><path d="M9 6L15 1L17 2L11 8Z" fill="#333"/></svg></button>
<button class="plain tb" aria-label="Narzędzie"><svg viewBox="0 0 18 18"><path d="M4 2H14V6H4Z" fill="#666"/><path d="M6 6H12V11H6Z" fill="#fff584"/><path d="M7 11H11V16H7Z" fill="#777"/></svg></button>
<button class="plain tb" aria-label="Ręcznie"><svg viewBox="0 0 18 18"><path d="M6 2L14 1L17 4L13 9L6 7Z" fill="#777" stroke="#222" stroke-width=".8"/><path d="M1 7L8 11L16 9M1 11L7 15L15 13M7 6L12 8" fill="none" stroke="#333" stroke-width="1.300"/><path d="M7 7L12 6L10 10Z" fill="#e9dd5c"/></svg></button>
</div>
</div>
</div>
<div class="coordbar d-flex align-items-center"><span>ZERO: Współrzędne</span>
<svg class="ms-auto" width="30" height="8" aria-hidden="true"><path d="M.5.500H8.500V7.500H.5ZM1 4H8M10.500.500H18.500V7.500H10.500ZM14.500 1V7M21.500.500H28.500V7.500H21.500ZM23 2L27 6M27 2L23 6" fill="#ddd" stroke="#777"/></svg></div>
</section>
</main>
<footer class="statusbar d-flex flex-shrink-0"><span class="flex-grow-1" style="padding-left:2px">Wskaż pierwszą linię/łuk</span>
<span class="st off">DOWOLNE</span><span class="st on">ELEMENT</span><span class="st off px-1">SIATKA</span><span class="st off">INS</span><span class="st off">PRO</span><span class="st">XY</span><span class="st">MM</span></footer>
</div>
</div>
<script src="https://cdn.jsdelivr.net/npm/bootstrap@5.3.0/dist/js/bootstrap.bundle.min.js"></script>
</body>
</html>
